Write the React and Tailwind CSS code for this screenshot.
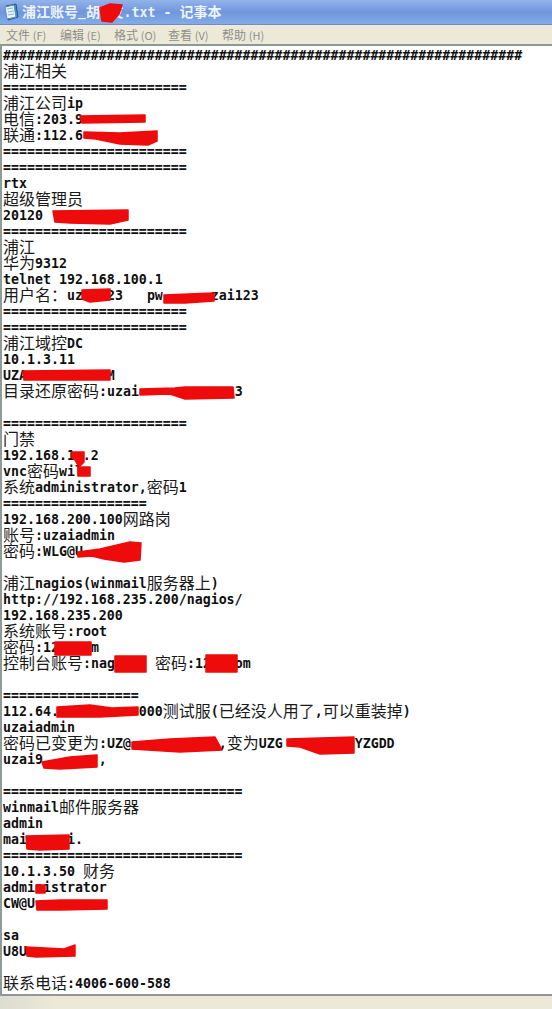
const sep23 = '='.repeat(23)
const sep30 = '='.repeat(30)

// redacted characters are left blank, the red scribbles are drawn on top
const lines = [
    '#'.repeat(65),
    '浦江相关',
    sep23,
    '浦江公司ip',
    '电信:203.9',
    '联通:112.6',
    sep23,
    sep23,
    'rtx',
    '超级管理员',
    '20120',
    sep23,
    '浦江',
    '华为9312',
    'telnet 192.168.100.1',
    '用户名：uz   23   pw      zai123',
    sep23,
    sep23,
    '浦江域控DC',
    '10.1.3.11',
    'UZA          M',
    '目录还原密码:uzai            3',
    '',
    sep23,
    '门禁',
    '192.168.1 .2',
    'vnc密码wil',
    '系统administrator,密码1',
    '='.repeat(18),
    '192.168.200.100网路岗',
    '账号:uzaiadmin',
    '密码:WLG@U',
    '',
    '浦江nagios(winmail服务器上)',
    'http://192.168.235.200/nagios/',
    '192.168.235.200',
    '系统账号:root',
    '密码:12    m',
    '控制台账号:nag     密码:12   om',
    '',
    '='.repeat(17),
    '112.64.          000测试服(已经没人用了,可以重装掉)',
    'uzaiadmin',
    '密码已变更为:UZ@           ,变为UZG         YZGDD',
    'uzai9       ,',
    '',
    sep30,
    'winmail邮件服务器',
    'admin',
    'mai     i.',
    sep30,
    '10.1.3.50 财务',
    'administrator',
    'CW@U',
    '',
    'sa',
    'U8U',
    '',
    '联系电话:4006-600-588',
]

const scribbles = [
    'M100 8 L110 4 L122 5 L119 14 L112 22 L102 21 Z',
    'M80 116 L145 115 L145 122 L82 123 Z',
    'M84 132 L120 133 L157 131 L157 141 L148 145 L120 144 L96 139 L84 138 Z',
    'M53 211 L128 210 L128 220 L110 224 L70 223 L55 222 Z',
    'M82 290 L110 289 L110 300 L90 302 L82 299 Z',
    'M164 295 L214 293 L214 301 L185 303 L164 303 Z',
    'M23 371 L110 370 L110 380 L24 380 Z',
    'M140 389 L175 388 L185 387 L233 387 L234 398 L185 399 L170 394 L140 395 Z',
    'M72 452 L84 452 L84 462 L79 467 L75 460 L72 458 Z',
    'M78 467 L90 467 L90 476 L78 476 Z',
    'M78 552 L100 549 L130 542 L141 543 L140 560 L124 562 L104 559 L92 556 L78 557 Z',
    'M55 642 L91 642 L91 655 L55 655 Z',
    'M115 656 L146 656 L146 672 L115 672 Z',
    'M206 655 L237 655 L237 672 L206 672 Z',
    'M57 707 L90 705 L112 708 L138 707 L138 715 L100 717 L57 717 Z',
    'M132 742 L170 739 L215 737 L222 750 L180 752 L132 749 Z',
    'M287 739 L354 737 L354 753 L320 754 L300 747 L287 746 Z',
    'M42 762 L70 757 L97 755 L97 767 L60 769 L44 768 Z',
    'M26 836 L69 835 L69 849 L40 850 L27 849 Z',
    'M36 885 L45 885 L45 893 L36 893 Z',
    'M36 901 L60 900 L107 900 L107 909 L60 910 L37 910 Z',
    'M26 947 L64 949 L75 945 L75 956 L36 957 L27 956 Z',
]

function Line({ text }) {
    const parts = text.split(/([\u3000-\u9fff\uff00-\uffef]+)/).filter(Boolean)
    return (
        <div className="h-4 leading-4 whitespace-pre">
            {parts.map((part, index) => (
                /[\u3000-\u9fff\uff00-\uffef]/.test(part) ? (
                    <span key={index} className="font-['Noto_Sans_CJK_SC',sans-serif] text-[16px] font-normal leading-4 align-[-1px] text-[#1a1a1a]">{part}</span>
                ) : (
                    <span key={index} className="font-['DejaVu_Sans_Mono',monospace] text-[13.28px] font-bold leading-4 text-[#101010]">{part}</span>
                )
            ))}
        </div>
    )
}

function NotepadIcon() {
    return (
        <svg width="16" height="18" viewBox="0 0 16 18" className="shrink-0">
            <path d="M3 3 L13 1 L15 14 L5 17 Z" fill="#3f8fc9" stroke="#1d5a92" strokeWidth="1" />
            <path d="M2 4 L11 2 L13 14 L4 16 Z" fill="#e8f3fa" stroke="#5d8fb5" strokeWidth="1" />
            <path d="M4 6 L10 5 M5 9 L11 8 M5 12 L11 11" stroke="#8ab4d1" strokeWidth="1" />
        </svg>
    )
}

const menus = [
    ['文件', '(F)'],
    ['编辑', '(E)'],
    ['格式', '(O)'],
    ['查看', '(V)'],
    ['帮助', '(H)'],
]

export default function App() {
    return (
        <div className="relative w-[552px] h-[1009px] overflow-hidden bg-white">
            <div className="h-[25px] flex items-center pl-[3px] gap-[3px] bg-gradient-to-b from-[#93b3ea] via-[#7096dc] to-[#82ace8] border-b border-[#7a84c6]">
                <NotepadIcon />
                <span className="font-['Noto_Sans_CJK_SC',sans-serif] font-bold text-[14px] text-[#eef3fb] whitespace-pre">浦江账号_胡   友<span className="font-['DejaVu_Sans_Mono',monospace] text-[13.28px]">.txt - </span>记事本</span>
            </div>
            <div className="h-[18px] flex items-center pl-[6px] gap-[7px] bg-[#ece9d8] border-t border-[#f3edcf] border-b-2 border-b-[#8a9a94] box-content">
                {menus.map(([label, key]) => (
                    <span key={label} className="w-[47px] font-['Noto_Sans_CJK_SC',sans-serif] text-[12px] text-[#8f8f88] whitespace-pre">{label} <span className="text-[11px]">{key}</span></span>
                ))}
            </div>
            <div className="h-[950px] pl-[1px] border-l-2 border-[#8f9b9b] border-b-2 border-b-[#8f959b]">
                {lines.map((text, index) => <Line key={index} text={text} />)}
            </div>
            <div className="h-[13px] bg-gradient-to-r from-[#dcdcd0] to-[#ece9d8] to-[10%]" />
            <svg width="552" height="1009" className="absolute inset-0 pointer-events-none">
                {scribbles.map((d, index) => <path key={index} d={d} fill="#ee0b0b" stroke="#ee0b0b" strokeWidth="1.5" strokeLinejoin="round" />)}
            </svg>
        </div>
    )
}
